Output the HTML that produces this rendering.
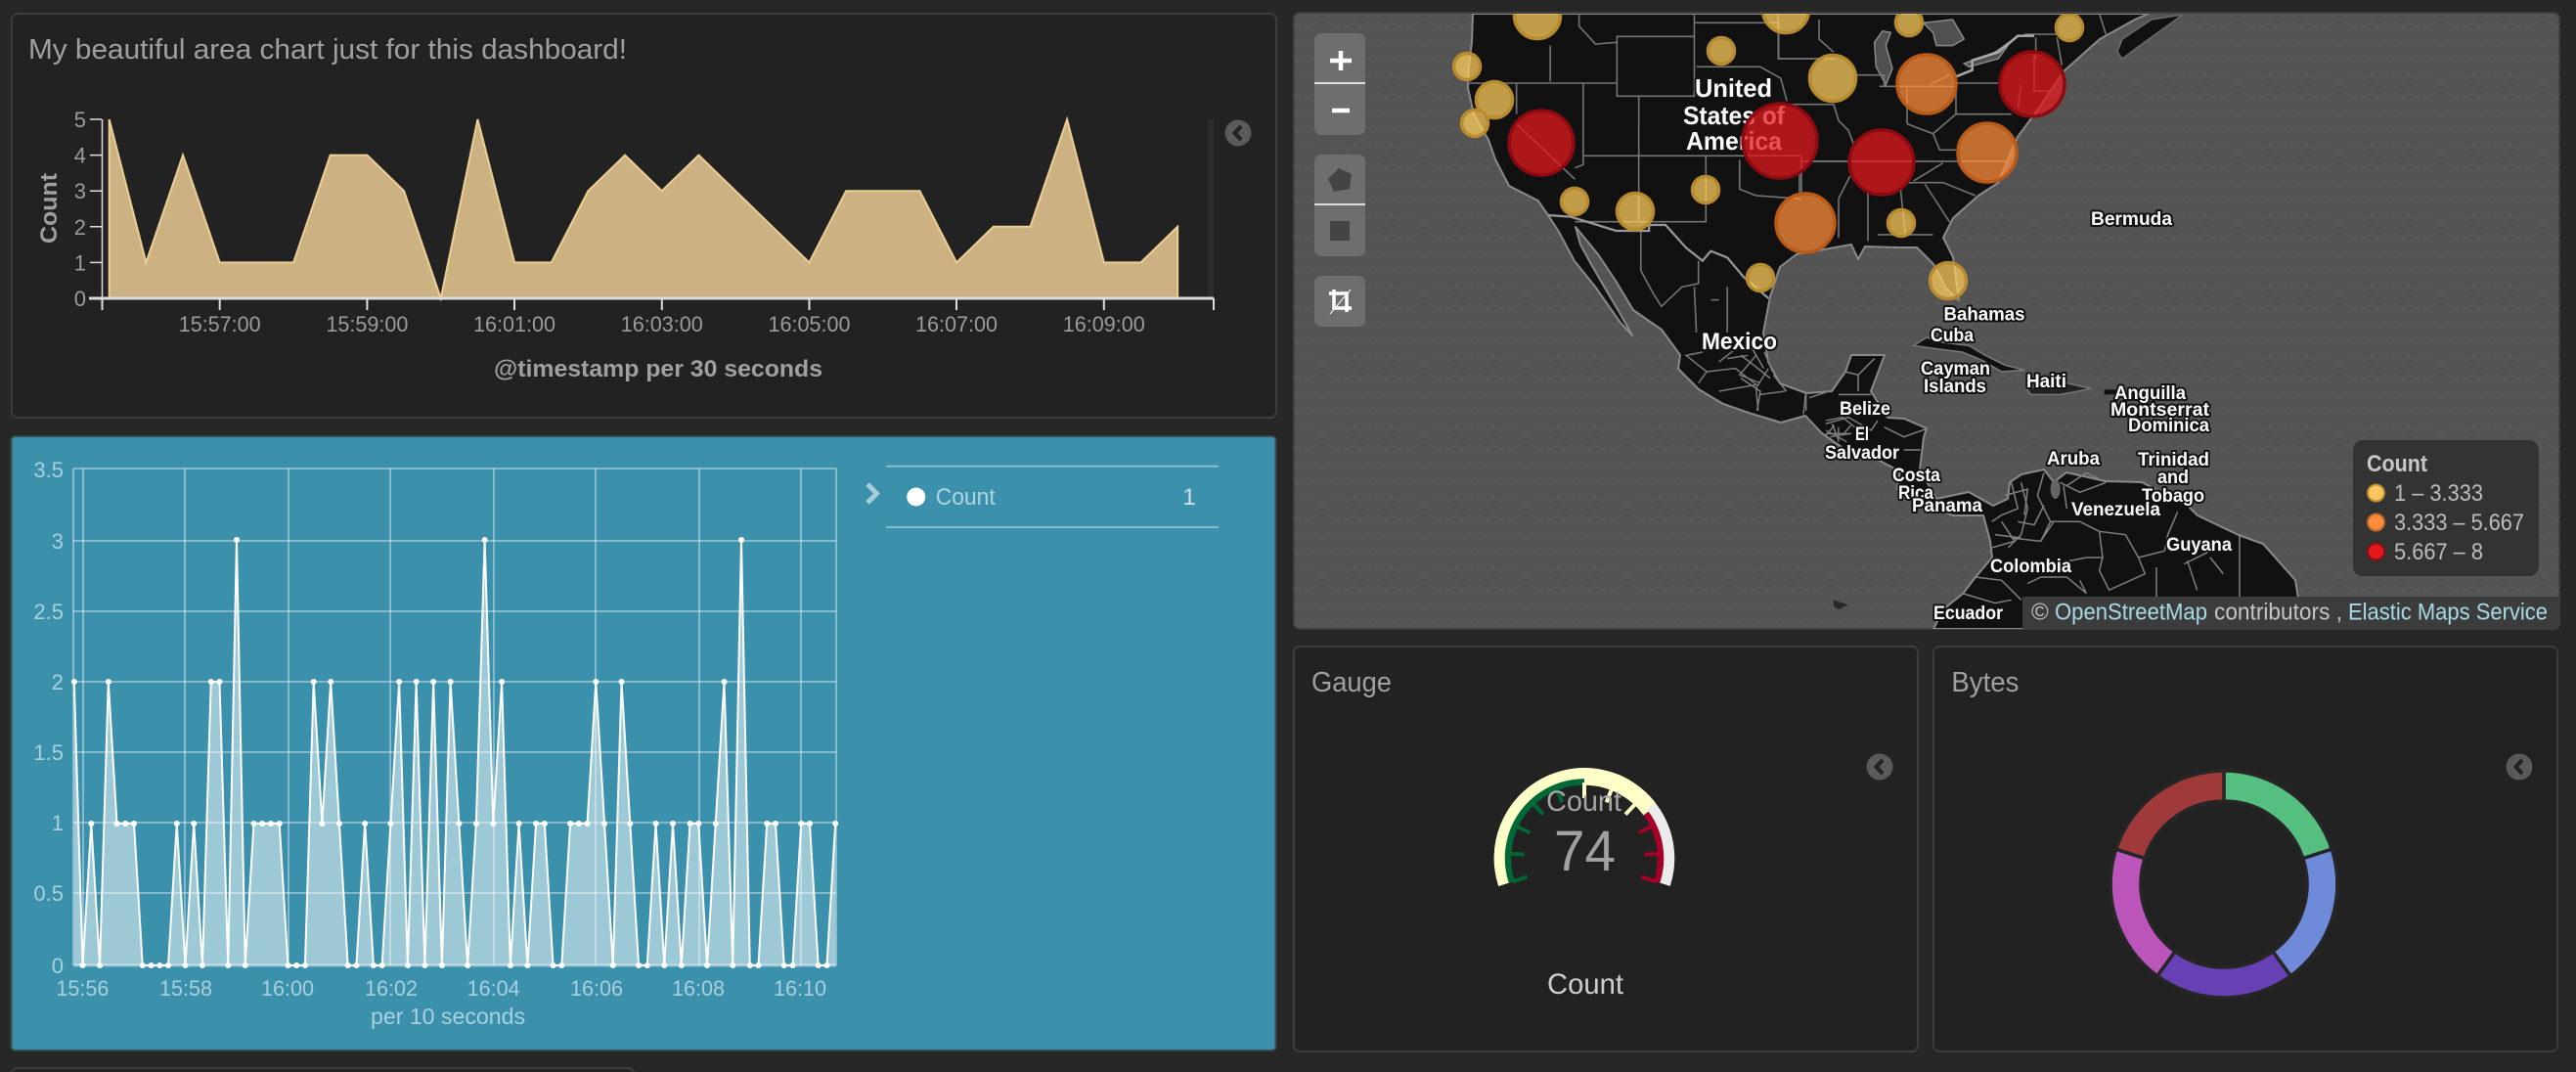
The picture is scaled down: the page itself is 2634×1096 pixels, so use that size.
<!DOCTYPE html>
<html><head><meta charset="utf-8"><title>Dashboard</title>
<style>
html,body{margin:0;padding:0;background:#272727}
svg{display:block}
text{font-family:"Liberation Sans",sans-serif}
.b *{vector-effect:non-scaling-stroke;fill:none}
.t text{font-weight:bold;fill:#fff;stroke:#111;stroke-width:4px;paint-order:stroke;stroke-linejoin:round;font-size:19px}
.a text{fill:#9c9c9c;font-size:22px}
.w text{fill:#a9d0dc;font-size:22px}
</style></head><body>
<svg xmlns="http://www.w3.org/2000/svg" width="2634" height="1096" viewBox="0 0 2634 1096">
<defs>
<pattern id="wave" width="26" height="18" patternUnits="userSpaceOnUse"><path d="M0 9l6.500-4 6.500 4 6.500-4 6.500 4" fill="none" stroke="#595959" stroke-width="1.500"/></pattern>
<clipPath id="mapc"><rect x="1323" y="14" width="1294" height="629" rx="6"/></clipPath>
</defs>
<rect width="2634" height="1096" fill="#272727"/>

<!-- Area chart panel -->
<rect x="12" y="14" width="1293" height="413" rx="6" fill="#222" stroke="#3c3c3c" stroke-width="2"/>
<text x="29" y="60" font-size="29" fill="#a0a0a0" textLength="612" lengthAdjust="spacingAndGlyphs">My beautiful area chart just for this dashboard!</text>
<rect x="1235" y="122" width="6" height="183" fill="#2d2d2d"/>
<polygon transform="translate(111.700 305) scale(37.670 -36.600)" fill="#ccb182" stroke="#edcf95" stroke-width="2" vector-effect="non-scaling-stroke" points="0,0 0,5 1,1 2,4 3,1 4,1 5,1 6,4 7,4 8,3 9,0 10,5 11,1 12,1 13,3 14,4 15,3 16,4 17,3 18,2 19,1 20,3 21,3 22,3 23,1 24,2 25,2 26,5 27,1 28,1 29,2 29,0"/>
<g stroke="#ddd" stroke-width="2" fill="none">
<path d="M104.500 122V305M92 122h12M92 158.600h12M92 195.200h12M92 231.800h12M92 268.400h12" stroke-width="1.500"/>
<path d="M91 305H1241" stroke-width="3"/>
<path d="M104.500 305v12M224.700 305v12M375.400 305v12M526 305v12M676.800 305v12M827.500 305v12M978 305v12M1128.800 305v12M1241 305v12"/>
</g>
<g class="a" text-anchor="end">
<text x="88" y="130">5</text><text x="88" y="166.600">4</text><text x="88" y="203.200">3</text><text x="88" y="239.800">2</text><text x="88" y="276.400">1</text><text x="88" y="313">0</text>
</g>
<g class="a" text-anchor="middle">
<text x="224.700" y="339" textLength="84" lengthAdjust="spacingAndGlyphs">15:57:00</text>
<text x="375.400" y="339" textLength="84" lengthAdjust="spacingAndGlyphs">15:59:00</text>
<text x="526" y="339" textLength="84" lengthAdjust="spacingAndGlyphs">16:01:00</text>
<text x="676.800" y="339" textLength="84" lengthAdjust="spacingAndGlyphs">16:03:00</text>
<text x="827.500" y="339" textLength="84" lengthAdjust="spacingAndGlyphs">16:05:00</text>
<text x="978" y="339" textLength="84" lengthAdjust="spacingAndGlyphs">16:07:00</text>
<text x="1128.800" y="339" textLength="84" lengthAdjust="spacingAndGlyphs">16:09:00</text>
</g>
<text x="505" y="385" font-size="24" font-weight="bold" fill="#a0a0a0" textLength="336" lengthAdjust="spacingAndGlyphs">@timestamp per 30 seconds</text>
<text transform="translate(58 249) rotate(-90)" font-size="24" font-weight="bold" fill="#a0a0a0" textLength="72" lengthAdjust="spacingAndGlyphs">Count</text>
<circle cx="1266" cy="136" r="13.500" fill="#5a5a5a"/><path d="M1269 129l-6.500 7 6.500 7" fill="none" stroke="#222" stroke-width="4"/>

<!-- Blue line panel -->
<rect x="11.500" y="446" width="1293" height="628" rx="4" fill="#3b91ac" stroke="#3c4a4f" stroke-width="2"/>
<polygon transform="translate(75.800 987) scale(8.746 -145)" fill="#fff" fill-opacity=".5" points="0,0 0,2 1,0 2,1 3,0 4,2 5,1 6,1 7,1 8,0 9,0 10,0 11,0 12,1 13,0 14,1 15,0 16,2 17,2 18,0 19,3 20,0 21,1 22,1 23,1 24,1 25,0 26,0 27,0 28,2 29,1 30,2 31,1 32,0 33,0 34,1 35,0 36,0 37,1 38,2 39,0 40,2 41,0 42,2 43,0 44,2 45,1 46,0 47,1 48,3 49,1 50,2 51,0 52,1 53,0 54,1 55,1 56,0 57,0 58,1 59,1 60,1 61,2 62,1 63,0 64,2 65,1 66,0 67,0 68,1 69,0 70,1 71,0 72,1 73,1 74,0 75,1 76,2 77,0 78,3 79,0 80,0 81,1 82,1 83,0 84,0 85,1 86,1 87,0 88,0 89,1 89,0"/>
<g stroke="#fff" stroke-opacity=".42" stroke-width="1.800" fill="none">
<path d="M75 479H855M75 553H855M75 625H855M75 697H855M75 769H855M75 841H855M75 913H855"/>
<path d="M85 479V987M189 479V987M295 479V987M399 479V987M505 479V987M609 479V987M715 479V987M819 479V987M855 479V987M75 479V987"/>
<path d="M75 987H855" stroke-width="3"/>
</g>
<polyline transform="translate(75.800 987) scale(8.746 -145)" fill="none" stroke="#fff" stroke-width="2" vector-effect="non-scaling-stroke" points="0,2 1,0 2,1 3,0 4,2 5,1 6,1 7,1 8,0 9,0 10,0 11,0 12,1 13,0 14,1 15,0 16,2 17,2 18,0 19,3 20,0 21,1 22,1 23,1 24,1 25,0 26,0 27,0 28,2 29,1 30,2 31,1 32,0 33,0 34,1 35,0 36,0 37,1 38,2 39,0 40,2 41,0 42,2 43,0 44,2 45,1 46,0 47,1 48,3 49,1 50,2 51,0 52,1 53,0 54,1 55,1 56,0 57,0 58,1 59,1 60,1 61,2 62,1 63,0 64,2 65,1 66,0 67,0 68,1 69,0 70,1 71,0 72,1 73,1 74,0 75,1 76,2 77,0 78,3 79,0 80,0 81,1 82,1 83,0 84,0 85,1 86,1 87,0 88,0 89,1"/>
<path transform="translate(75.800 987) scale(8.746 -145)" fill="none" stroke="#fff" stroke-width="6" stroke-linecap="round" vector-effect="non-scaling-stroke" d="M0 2h.01M1 0h.01M2 1h.01M3 0h.01M4 2h.01M5 1h.01M6 1h.01M7 1h.01M8 0h.01M9 0h.01M10 0h.01M11 0h.01M12 1h.01M13 0h.01M14 1h.01M15 0h.01M16 2h.01M17 2h.01M18 0h.01M19 3h.01M20 0h.01M21 1h.01M22 1h.01M23 1h.01M24 1h.01M25 0h.01M26 0h.01M27 0h.01M28 2h.01M29 1h.01M30 2h.01M31 1h.01M32 0h.01M33 0h.01M34 1h.01M35 0h.01M36 0h.01M37 1h.01M38 2h.01M39 0h.01M40 2h.01M41 0h.01M42 2h.01M43 0h.01M44 2h.01M45 1h.01M46 0h.01M47 1h.01M48 3h.01M49 1h.01M50 2h.01M51 0h.01M52 1h.01M53 0h.01M54 1h.01M55 1h.01M56 0h.01M57 0h.01M58 1h.01M59 1h.01M60 1h.01M61 2h.01M62 1h.01M63 0h.01M64 2h.01M65 1h.01M66 0h.01M67 0h.01M68 1h.01M69 0h.01M70 1h.01M71 0h.01M72 1h.01M73 1h.01M74 0h.01M75 1h.01M76 2h.01M77 0h.01M78 3h.01M79 0h.01M80 0h.01M81 1h.01M82 1h.01M83 0h.01M84 0h.01M85 1h.01M86 1h.01M87 0h.01M88 0h.01M89 1h.01"/>
<g class="w" text-anchor="end">
<text x="65" y="488">3.5</text><text x="65" y="561">3</text><text x="65" y="633">2.5</text><text x="65" y="705">2</text><text x="65" y="777">1.5</text><text x="65" y="849">1</text><text x="65" y="921">0.5</text><text x="65" y="995">0</text>
</g>
<g class="w" text-anchor="middle">
<text x="84.400" y="1018" textLength="54" lengthAdjust="spacingAndGlyphs">15:56</text>
<text x="190" y="1018" textLength="54" lengthAdjust="spacingAndGlyphs">15:58</text>
<text x="294" y="1018" textLength="54" lengthAdjust="spacingAndGlyphs">16:00</text>
<text x="400" y="1018" textLength="54" lengthAdjust="spacingAndGlyphs">16:02</text>
<text x="504.600" y="1018" textLength="54" lengthAdjust="spacingAndGlyphs">16:04</text>
<text x="610" y="1018" textLength="54" lengthAdjust="spacingAndGlyphs">16:06</text>
<text x="714" y="1018" textLength="54" lengthAdjust="spacingAndGlyphs">16:08</text>
<text x="818" y="1018" textLength="54" lengthAdjust="spacingAndGlyphs">16:10</text>
</g>
<text x="379" y="1047" font-size="23" fill="#a9d0dc" textLength="158" lengthAdjust="spacingAndGlyphs">per 10 seconds</text>
<path d="M906 476.700H1246M906 539H1246" stroke="#8fc0cf" stroke-width="1.800" fill="none"/>
<path d="M887 495l9.500 9.500-9.500 9.500" fill="none" stroke="#a5cdd9" stroke-width="5"/>
<circle cx="936.700" cy="508" r="9.500" fill="#fff"/>
<text x="956.700" y="516" font-size="24" fill="#b0d4df" textLength="61" lengthAdjust="spacingAndGlyphs">Count</text>
<text x="1216" y="516" font-size="24" fill="#d0e5ec" text-anchor="middle">1</text>

<!-- Map panel -->
<rect x="1323" y="13" width="1294" height="630" rx="6" fill="#545454" stroke="#3f3f3f" stroke-width="2"/>
<g clip-path="url(#mapc)">
<rect x="1323" y="14" width="1294" height="629" fill="url(#wave)"/>
<path fill="#111" stroke="#8a8a8a" stroke-width="2" stroke-linejoin="round" d="M1506 14L1505 43 1502 67 1501 90 1507 117 1522 143 1529 163 1543 190 1572.500 205 1583 220 1594 237 1610 267 1631 293 1657 330 1669 343 1655 318 1642 296 1628 272 1616 250 1611 232 1634 260 1652 287 1670 317 1699 337 1718 363 1716 377 1737 398 1762 413 1791 423 1821 432 1846 425 1863 443 1890 462 1920 470 1943 482 1940 500 1962 512 1997 527 2028 527 2035 553 2037 570 2020 590 2007 607 1987 623 1977 643 2355 643 2347 593 2314 556 2289 547 2247 527 2237 517 2190 493 2153 492 2113 483 2100 493 2090 480 2067 485 2055 493 2053 510 2038 517 2013 503 1980 510 1963 480 1967 447 1970 438 1947 428 1930 427 1913 400 1927 363 1893 363 1887 380 1873 400 1847 402 1820 392 1808 370 1803 340 1810 303 1820 273 1837 260 1893 250 1900 265 1907 252 1940 253 1960 253 1977 270 1990 295 2003 307 1997 263 1987 243 1997 223 2023 200 2043 187 2063 140 2083 113 2110 73 2147 40 2183 20 2197 14Z"/>
<path fill="#111" stroke="#6a6a6a" stroke-width="1.500" d="M2165 53L2170 60 2193 43 2232 15 2200 20 2170 40Z"/>
<!-- lakes -->
<g fill="#505050" stroke="#8a8a8a" stroke-width="1.500" transform="translate(1800 10) scale(.3333)">
<path vector-effect="non-scaling-stroke" d="M375 65L350 100 355 175 385 230 405 180 385 110 400 70Z"/>
<path vector-effect="non-scaling-stroke" d="M500 40L590 30 625 90 590 110 540 110 530 70Z"/>
<path vector-effect="non-scaling-stroke" d="M625 165L720 130 770 95 730 150 640 175Z"/>
</g>
<!-- borders: west -->
<g class="b" transform="translate(1320 0) scale(.4209 .3333)" stroke="#757575" stroke-width="1.600">
<path d="M700 42L700 80 740 135 790 130M630 140V250M430 255H790M548 255V350M710 255V505L690 515M548 380L690 550M792 112H980V295H792ZM845 295V680M710 478H1240M980 42V205M980 70H1185M985 205H1140L1190 240 1205 310M1185 70V180H1290M1008 478V680H690M1090 490V580L1130 600 1240 610M1240 478V590M1240 495H1510M1205 320H1320"/>
<path stroke="#9a9a9a" stroke-width="2.200" d="M625 660L680 665 790 708H870V690H910L960 760 1000 800 1020 770 1060 790 1100 850 1160 915"/>
<path d="M850 710L850 830 880 900 900 940 950 880 990 870 990 800M980 880L985 1020M1060 880L1060 1020M1020 920H1040"/>
</g>
<!-- borders: mexico south -->
<g class="b" transform="translate(1320 320) scale(.4209 .3333)" stroke="#7a7a7a" stroke-width="1.500">
<path d="M1000 120L960 130 1010 180 990 215M1010 180L1080 170 1130 220 1040 240M1080 110L1040 150M1130 130L1090 190 1140 215M1160 170L1130 230 1135 300M1200 240L1140 250M1250 250L1245 310M1150 120L1170 180M1060 140L1110 130M1300 330L1340 320 1370 350M1310 380L1360 370M1330 350V395M1300 360L1350 395M1320 345L1300 375M1340 375L1360 345"/>
</g>
<!-- borders: east -->
<g class="b" transform="translate(1800 10) scale(.3333)" stroke="#757575" stroke-width="1.600">
<path d="M55 12V150H230M180 30V90L225 130M295 200H380V235M365 235H450V350M450 235H600V320L530 380 450 350M225 290L240 340 270 370 285 410M160 465H760M120 500V560M275 510L240 580V700M330 560V710M430 550L445 690M360 690H530M450 530H560L660 570M505 535L580 650M600 225H730M600 320H770M530 380L550 430 600 430M560 470L470 525M845 85V150M910 85L925 170M810 75H910M1040 12L1060 75M800 230L790 300M840 140V250H920M520 230L580 200"/>
<path stroke="#aaa" stroke-width="2.500" d="M600 205L650 185V155L730 130 790 80H840"/>
</g>
<!-- borders: central + south america, caribbean -->
<g transform="translate(1780 320) scale(.3333)">
<path vector-effect="non-scaling-stroke" fill="#111" stroke="#7a7a7a" stroke-width="1.500" d="M530 100L570 75 620 90 700 100 750 130 810 160 870 175 800 180 740 145 680 120 600 110Z"/>
<path vector-effect="non-scaling-stroke" fill="#222" stroke="#777" stroke-width="1.500" d="M875 230L1000 215 1075 232 980 250 890 250Z"/>
<path fill="#111" d="M1115 235H1150V250H1115Z"/>
<ellipse cx="965" cy="540" rx="15" ry="30" fill="#666"/>
<path fill="#2a2a2a" d="M285 880L300 885 330 895 300 910 285 900Z"/>
</g>
<g class="b" transform="translate(1780 320) scale(.3333)" stroke="#808080" stroke-width="1.500">
<path d="M0 200L60 240 50 300M100 190L140 240M200 245V300M270 240L210 260M320 180L360 190 410 140M360 190V240M300 250H400M260 340L330 320 400 360 420 330M440 350L500 380 570 355M500 420H550M260 370H340M280 340L300 390M0 130L40 160 90 200M30 100L70 170"/>
<path d="M830 520L850 600 800 620 770 640M800 640L840 700 770 720M860 520L880 600 860 680 820 720M930 490L910 560 950 640 920 700M950 640H1040L1100 670M1100 670L1110 750 1060 750 960 770M1100 670L1180 680 1220 750 1300 730M1110 750L1100 790 1130 850 1240 800 1220 750M1040 820L1060 860 1000 810H920L880 830M1340 610L1310 680 1300 730M1370 760L1400 850M1440 750L1480 800M1360 770L1440 730M1275 780V870M720 810L800 820 860 880M680 860L780 890 830 880M1000 530L1060 490 1100 510M1000 600L990 530M960 640L920 700 830 690M1530 680V870M810 560L880 540 870 620M850 640L900 650 930 590M780 680L860 690M980 520L1040 550 1120 520"/>
</g>
<!-- labels -->
<g class="t">
<text x="1733" y="99" style="font-size:26px" textLength="79" lengthAdjust="spacingAndGlyphs">United</text>
<text x="1721" y="127" style="font-size:26px" textLength="104" lengthAdjust="spacingAndGlyphs">States of</text>
<text x="1724" y="153" style="font-size:26px" textLength="98" lengthAdjust="spacingAndGlyphs">America</text>
<text x="1740" y="357" style="font-size:24px" textLength="77" lengthAdjust="spacingAndGlyphs">Mexico</text>
<text x="2138" y="230" textLength="83" lengthAdjust="spacingAndGlyphs">Bermuda</text>
<text x="1987.500" y="327.500" textLength="83" lengthAdjust="spacingAndGlyphs">Bahamas</text>
<text x="1974" y="349" textLength="44" lengthAdjust="spacingAndGlyphs">Cuba</text>
<text x="1964" y="383" textLength="71" lengthAdjust="spacingAndGlyphs">Cayman</text>
<text x="1967" y="401" textLength="64" lengthAdjust="spacingAndGlyphs">Islands</text>
<text x="2072" y="396" textLength="41" lengthAdjust="spacingAndGlyphs">Haiti</text>
<text x="2162" y="408" textLength="73" lengthAdjust="spacingAndGlyphs">Anguilla</text>
<text x="2158" y="425" textLength="101" lengthAdjust="spacingAndGlyphs">Montserrat</text>
<text x="2176" y="441" textLength="83" lengthAdjust="spacingAndGlyphs">Dominica</text>
<text x="1881" y="424" textLength="52" lengthAdjust="spacingAndGlyphs">Belize</text>
<text x="1897" y="450" textLength="14" lengthAdjust="spacingAndGlyphs">El</text>
<text x="1866" y="469" textLength="76" lengthAdjust="spacingAndGlyphs">Salvador</text>
<text x="1935" y="492" textLength="49" lengthAdjust="spacingAndGlyphs">Costa</text>
<text x="1941" y="510" textLength="36" lengthAdjust="spacingAndGlyphs">Rica</text>
<text x="1955" y="523" textLength="72" lengthAdjust="spacingAndGlyphs">Panama</text>
<text x="2093" y="475" textLength="54" lengthAdjust="spacingAndGlyphs">Aruba</text>
<text x="2186" y="476" textLength="73" lengthAdjust="spacingAndGlyphs">Trinidad</text>
<text x="2206" y="494" textLength="32" lengthAdjust="spacingAndGlyphs">and</text>
<text x="2190" y="513" textLength="64" lengthAdjust="spacingAndGlyphs">Tobago</text>
<text x="2118" y="527" textLength="91" lengthAdjust="spacingAndGlyphs">Venezuela</text>
<text x="2215" y="563" textLength="67" lengthAdjust="spacingAndGlyphs">Guyana</text>
<text x="2035" y="585" textLength="83" lengthAdjust="spacingAndGlyphs">Colombia</text>
<text x="1977" y="633" textLength="71" lengthAdjust="spacingAndGlyphs">Ecuador</text>
</g>
<!-- markers -->
<g fill="#fecc5c" fill-opacity=".75" stroke="#b88c2e" stroke-width="3.500">
<circle cx="1572" cy="16" r="23.500"/><circle cx="1500" cy="68" r="13.500"/><circle cx="1528" cy="102" r="18.500"/><circle cx="1508" cy="126" r="13.500"/>
<circle cx="1610" cy="206" r="13.500"/><circle cx="1672" cy="216" r="18.500"/><circle cx="1744" cy="194" r="13.500"/><circle cx="1760" cy="52" r="13.500"/>
<circle cx="1826" cy="10" r="23.500"/><circle cx="1874" cy="80" r="23.500"/><circle cx="1952" cy="23" r="13.500"/><circle cx="1944" cy="228" r="13.500"/>
<circle cx="1800" cy="284" r="13.500"/><circle cx="1992" cy="287" r="18.500"/><circle cx="2116" cy="28" r="13.500"/>
</g>
<g fill="#fd8d3c" fill-opacity=".75" stroke="#b95a17" stroke-width="3.500">
<circle cx="1846" cy="228" r="30"/><circle cx="1970" cy="86" r="30"/><circle cx="2032" cy="156" r="30"/>
</g>
<g fill="#e31a1c" fill-opacity=".75" stroke="#8c0a10" stroke-width="3.500">
<circle cx="1576" cy="146" r="33"/><circle cx="1820" cy="144" r="38"/><circle cx="1924" cy="166" r="33"/><circle cx="2078" cy="86" r="33"/>
</g>
<!-- attribution -->
<rect x="2068" y="610" width="549" height="33" fill="#3c3c3c"/>
<text y="633.500" font-size="24"><tspan x="2077" fill="#c5c5c5">©</tspan></text>
<text x="2101" y="633.500" font-size="24" fill="#a6dbe6" textLength="156" lengthAdjust="spacingAndGlyphs">OpenStreetMap</text>
<text x="2264" y="633.500" font-size="24" fill="#c5c5c5" textLength="131" lengthAdjust="spacingAndGlyphs">contributors ,</text>
<text x="2401" y="633.500" font-size="24" fill="#a6dbe6" textLength="204" lengthAdjust="spacingAndGlyphs">Elastic Maps Service</text>
<!-- legend -->
<rect x="2406" y="450" width="190" height="139" rx="10" fill="#333"/>
<text x="2420" y="482" font-size="24" font-weight="bold" fill="#c8c8c8" textLength="62" lengthAdjust="spacingAndGlyphs">Count</text>
<circle cx="2429.500" cy="504" r="8.500" fill="#fdc65f" stroke="#b98d30" stroke-width="2"/>
<circle cx="2429.500" cy="534" r="8.500" fill="#fd8d3c" stroke="#bd6a2a" stroke-width="2"/>
<circle cx="2429.500" cy="564" r="8.500" fill="#e31a1c" stroke="#8e0f14" stroke-width="2"/>
<text x="2448" y="512" font-size="24" fill="#bdbdbd" textLength="91" lengthAdjust="spacingAndGlyphs">1 – 3.333</text>
<text x="2448" y="542" font-size="24" fill="#bdbdbd" textLength="133" lengthAdjust="spacingAndGlyphs">3.333 – 5.667</text>
<text x="2448" y="572" font-size="24" fill="#bdbdbd" textLength="91" lengthAdjust="spacingAndGlyphs">5.667 – 8</text>
<!-- map controls -->
<g fill="#6e6e6e">
<rect x="1344" y="34" width="52" height="104" rx="7"/>
<rect x="1344" y="158" width="52" height="104" rx="7"/>
<rect x="1344" y="282" width="52" height="52" rx="7"/>
</g>
<path d="M1344 85H1396M1344 209H1396" stroke="#ddd" stroke-width="2"/>
<path d="M1360 62H1382M1371 52V72M1362 113H1380" stroke="#fff" stroke-width="4.500" fill="none"/>
<polygon points="1369,172 1382,178 1380,193 1364,196 1358,183" fill="#444"/>
<rect x="1360" y="226" width="20" height="20" fill="#444"/>
<path d="M1359 300H1377V319M1364 296V315H1382" fill="none" stroke="#fff" stroke-width="3.500"/>
<path d="M1360 321L1381 296" stroke="#fff" stroke-width="1"/>
</g>

<!-- Gauge panel -->
<rect x="1323" y="661" width="638" height="414" rx="6" fill="#222" stroke="#3c3c3c" stroke-width="2"/>
<text x="1341" y="707" font-size="29" fill="#a0a0a0" textLength="82" lengthAdjust="spacingAndGlyphs">Gauge</text>
<circle cx="1922" cy="784" r="13.500" fill="#5a5a5a"/><path d="M1925 777l-6.500 7 6.500 7" fill="none" stroke="#222" stroke-width="4"/>
<path d="M1538.200 904.100A86 86 0 1 1 1701.800 904.100" fill="none" stroke="#ebebeb" stroke-width="12.500"/>
<path d="M1538.200 904.100A86 86 0 0 1 1687.800 824.500" fill="none" stroke="#ffffc8" stroke-width="12.500"/>
<path d="M1545.800 901.600A78 78 0 0 1 1620 799.500" fill="none" stroke="#006837" stroke-width="6.500"/>
<path d="M1620 799.500A78 78 0 0 1 1683.100 831.600" fill="none" stroke="#ffffc8" stroke-width="6.500"/>
<path d="M1683.100 831.600A78 78 0 0 1 1694.200 901.600" fill="none" stroke="#a50026" stroke-width="6.500"/>
<g stroke-width="4" fill="none">
<g stroke="#006837">
<path d="M1620 800V816" transform="rotate(-108 1620 877.500)"/><path d="M1620 800V816" transform="rotate(-86.400 1620 877.500)"/><path d="M1620 800V816" transform="rotate(-64.800 1620 877.500)"/><path d="M1620 800V816" transform="rotate(-43.200 1620 877.500)"/><path d="M1620 800V816" transform="rotate(-21.600 1620 877.500)"/>
</g>
<g stroke="#ffffc8">
<path d="M1620 800V816"/><path d="M1620 800V816" transform="rotate(21.600 1620 877.500)"/><path d="M1620 800V816" transform="rotate(43.200 1620 877.500)"/>
</g>
<g stroke="#a50026">
<path d="M1620 800V816" transform="rotate(64.800 1620 877.500)"/><path d="M1620 800V816" transform="rotate(86.400 1620 877.500)"/><path d="M1620 800V816" transform="rotate(108 1620 877.500)"/>
</g>
</g>
<text x="1581" y="829" font-size="30" fill="#a6a6a6" textLength="77" lengthAdjust="spacingAndGlyphs">Count</text>
<text x="1589" y="890" font-size="58" fill="#a0a0a0" textLength="63" lengthAdjust="spacingAndGlyphs">74</text>
<text x="1582" y="1016" font-size="30" fill="#cfcfcf" textLength="78" lengthAdjust="spacingAndGlyphs">Count</text>

<!-- Bytes panel -->
<rect x="1977" y="661" width="638" height="414" rx="6" fill="#222" stroke="#3c3c3c" stroke-width="2"/>
<text x="1995.400" y="707" font-size="29" fill="#a0a0a0" textLength="69" lengthAdjust="spacingAndGlyphs">Bytes</text>
<circle cx="2576" cy="784" r="13.500" fill="#5a5a5a"/><path d="M2579 777l-6.500 7 6.500 7" fill="none" stroke="#222" stroke-width="4"/>
<g stroke="#262626" stroke-width="3.500" stroke-linejoin="miter">
<path fill="#54bf80" d="M2274 788A116 116 0 0 1 2384.300 868.200L2354.800 877.700A85 85 0 0 0 2274 819Z"/>
<path fill="#6e8ad8" d="M2384.300 868.200A116 116 0 0 1 2342.200 997.800L2324 972.800A85 85 0 0 0 2354.800 877.700Z"/>
<path fill="#6640b4" d="M2342.200 997.800A116 116 0 0 1 2205.800 997.800L2224 972.800A85 85 0 0 0 2324 972.800Z"/>
<path fill="#bb55b9" d="M2205.800 997.800A116 116 0 0 1 2163.700 868.200L2193.200 877.700A85 85 0 0 0 2224 972.800Z"/>
<path fill="#a03a3a" d="M2163.700 868.200A116 116 0 0 1 2274 788L2274 819A85 85 0 0 0 2193.200 877.700Z"/>
</g>

<!-- Next row panel peeking -->
<rect x="12" y="1092" width="636" height="20" rx="6" fill="#222" stroke="#3c3c3c" stroke-width="2"/>
</svg>
</body></html>
